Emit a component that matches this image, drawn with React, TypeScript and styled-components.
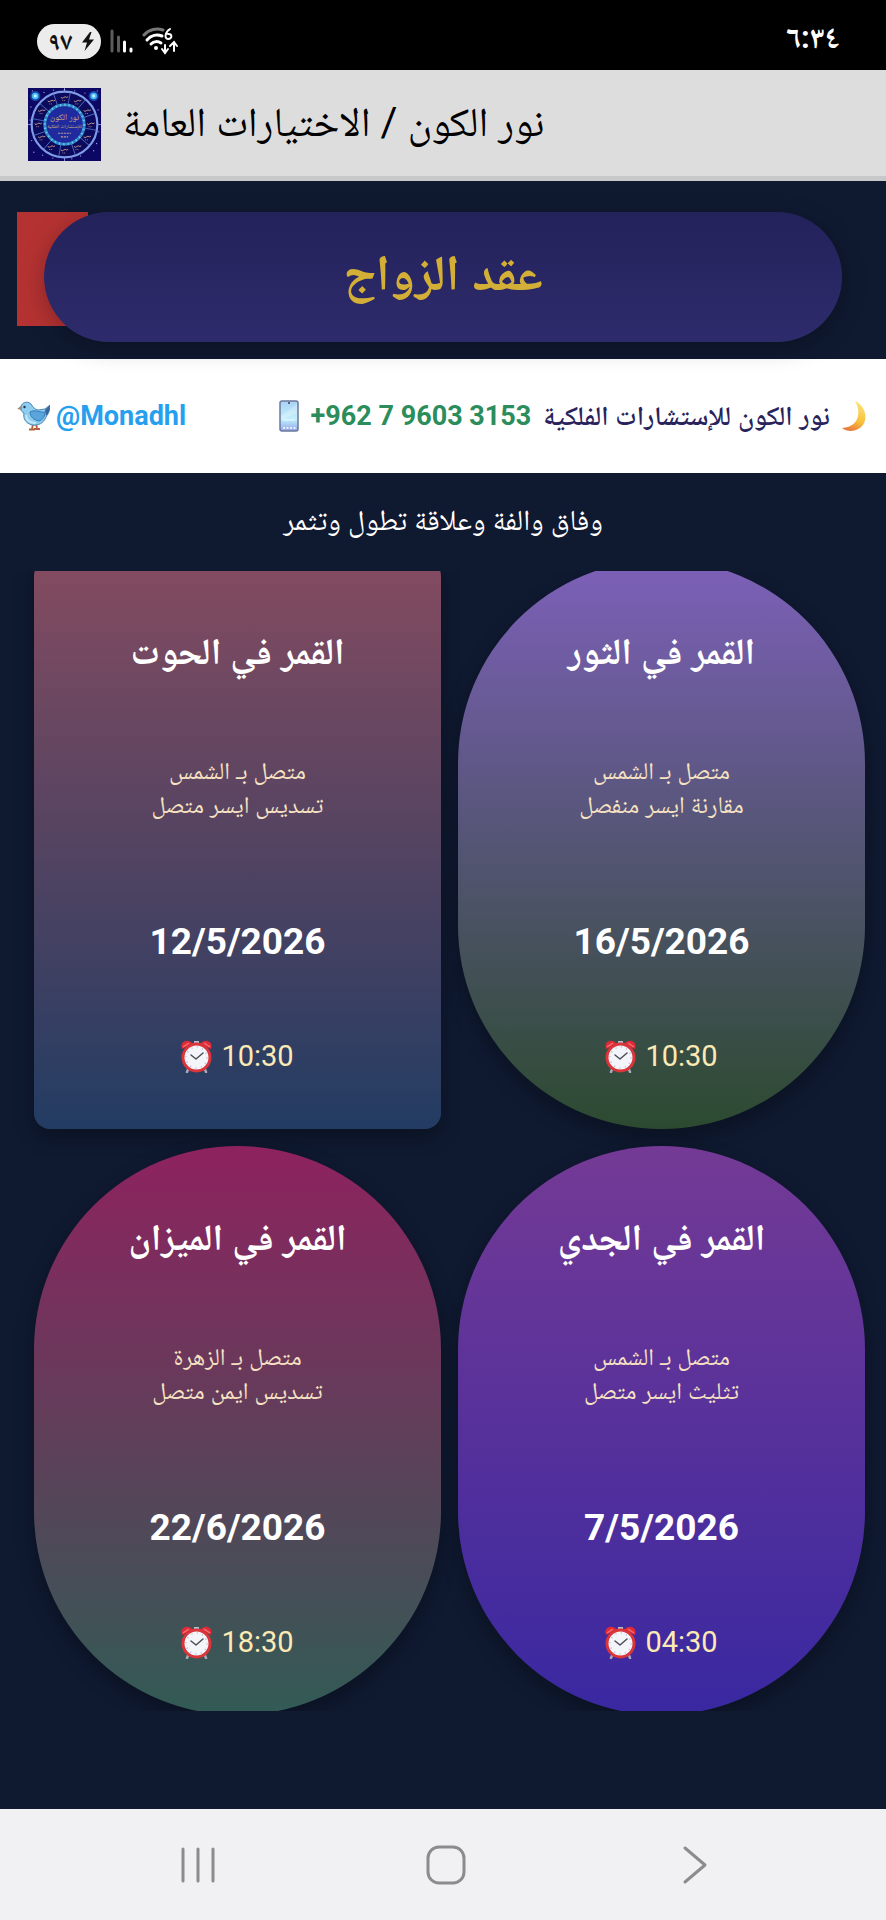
import { useLayoutEffect, useRef } from 'react';
import styled, { createGlobalStyle } from 'styled-components';

const GlobalStyle = createGlobalStyle`
  * {
    box-sizing: border-box;
  }

  body {
    margin: 0;
    background: #0f1930;
    font-family: Roboto, 'Noto Naskh Arabic', 'DejaVu Sans', sans-serif;
  }

  h1, h2, p {
    margin: 0;
  }
`;

const Screen = styled.div`
  display: flex;
  flex-direction: column;
  height: 100vh;
`;

const StatusBar = styled.div`
  display: flex;
  align-items: center;
  gap: 9px;
  height: 70px;
  padding: 12px 46px 0 37px;
  background: #000;
  color: #fff;
  direction: ltr;
`;

const Battery = styled.span`
  display: flex;
  align-items: center;
  justify-content: space-between;
  width: 64px;
  height: 35px;
  padding: 0 7px 0 11px;
  border-radius: 18px;
  background: #ececec;
  color: #111;
  font-size: 25px;
  font-weight: 700;
  line-height: 35px;
`;

const Clock = styled.time`
  margin-left: auto;
  padding-bottom: 6px;
  font-size: 31px;
  font-weight: 700;
  line-height: 40px;
`;

const AppBar = styled.header`
  display: flex;
  align-items: center;
  gap: 22px;
  height: 111px;
  padding: 2px 28px 0;
  border-bottom: 5px solid #c6c8ca;
  background: #dddddd;
  direction: ltr;
`;

const AppTitle = styled.h1`
  padding-bottom: 4px;
  color: #000;
  font-size: 41px;
  font-weight: 400;
  line-height: 64px;
`;

const TopicBar = styled.section`
  position: relative;
  z-index: 1;
  padding: 31px 44px 17px;
`;

const BackButton = styled.button`
  position: absolute;
  top: 31px;
  left: 17px;
  display: flex;
  align-items: center;
  width: 71px;
  height: 114px;
  padding: 0 0 12px 28px;
  border: 0;
  background: #b53232;
  color: #fff;
`;

const Topic = styled.h2`
  position: relative;
  height: 130px;
  border-radius: 65px;
  background: linear-gradient(#24225b, #2d2b6b);
  box-shadow: 0 6px 24px rgba(0, 0, 0, 0.25);
  color: #d3af37;
  font-size: 50px;
  font-weight: 700;
  line-height: 122px;
  text-align: center;
`;

const ContactBar = styled.section`
  display: flex;
  align-items: center;
  justify-content: space-between;
  height: 114px;
  padding: 0 20px 0 17px;
  background: #fff;
`;

const ContactGroup = styled.div`
  display: flex;
  align-items: center;
  gap: 12px;
`;

const Brand = styled.span`
  color: #28235d;
  font-size: 27px;
  font-weight: 600;
  line-height: 40px;
`;

const ContactLink = styled.a<{ $color: string; $gap: number }>`
  display: flex;
  align-items: center;
  gap: ${({ $gap }) => $gap}px;
  color: ${({ $color }) => $color};
  direction: ltr;
  font-size: 27px;
  font-weight: 700;
  line-height: 40px;
  text-decoration: none;
`;

const Summary = styled.p`
  padding: 25px 24px 29px;
  color: #fff;
  font-size: 29px;
  line-height: 44px;
  text-align: center;
`;

const Results = styled.main`
  flex: 1;
  min-height: 0;
  margin-bottom: 98px;
  overflow-y: auto;
  scrollbar-width: none;
`;

const CardGrid = styled.div`
  display: grid;
  grid-template-columns: 1fr 1fr;
  gap: 17px;
  padding: 0 21px 0 34px;
`;

const Card = styled.article<{ $from: string; $to: string; $round: boolean }>`
  padding: 62px 24px 53px;
  border-radius: ${({ $round }) => ($round ? '204px' : '16px')};
  background: linear-gradient(${({ $from, $to }) => `${$from}, ${$to}`});
  box-shadow: 0 8px 20px rgba(0, 0, 0, 0.3);
  text-align: center;
`;

const CardTitle = styled.h2`
  margin-bottom: 72px;
  color: #fff;
  font-size: 37px;
  font-weight: 700;
  line-height: 60px;
`;

const Aspect = styled.p`
  color: #f6e2c2;
  font-size: 24px;
  line-height: 34px;
`;

const CardDate = styled.p`
  margin: 98px 0 72px;
  color: #fff;
  direction: ltr;
  font-size: 37px;
  font-weight: 700;
  line-height: 44px;
`;

const CardTime = styled.p`
  display: flex;
  align-items: center;
  justify-content: center;
  gap: 9px;
  color: #fde9b4;
  direction: ltr;
  font-size: 29px;
  line-height: 40px;
`;

const NavBar = styled.nav`
  display: flex;
  height: 111px;
  padding: 0 67px 0 74px;
  background: #f1f1f3;
  direction: ltr;
`;

const NavButton = styled.button`
  display: flex;
  flex: 1;
  align-items: center;
  justify-content: center;
  border: 0;
  background: none;
  color: #8c8c8e;
`;

const STARS = [[6, 4], [22, 6], [35, 3], [64, 4], [78, 7], [95, 4], [4, 26], [96, 30], [3, 44], [97, 60], [5, 72], [94, 76], [8, 88], [20, 92], [34, 96], [60, 97], [72, 93], [90, 86], [15, 22], [86, 22], [50, 2]];
const HOUSES = Array.from({ length: 12 }, (_, i) => i * 30);

function LogoIcon(): JSX.Element {
  return (
    <svg width="73" height="73" viewBox="0 0 100 100" role="img" aria-label="نور الكون">
      <rect width="100" height="100" fill="#0b0762" />
      {STARS.map(([x, y]) => (
        <circle key={`${x}-${y}`} cx={x} cy={y} r="0.9" fill="#9d9be8" />
      ))}
      {[10, 90].map((x) => (
        <g key={x}>
          <circle cx={x} cy="11" r="7" fill="#1c62c8" opacity="0.7" />
          <circle cx={x} cy="11" r="4.5" fill="#48bdf6" />
          <circle cx={x} cy="11" r="2" fill="#c9f6ff" />
        </g>
      ))}
      <path d="M50 0V8M50 93V100M0 50H6M94 50H100" stroke="#a9b9f2" strokeWidth="1" />
      <circle cx="50" cy="50" r="45" fill="#0c0a5c" stroke="#7f9be6" strokeWidth="3" />
      {HOUSES.map((angle) => (
        <g key={angle} transform={`rotate(${angle} 50 50)`}>
          <path d="M58 6L55 22" stroke="#5a7fd6" strokeWidth="1" />
          <g transform={`translate(50 14) rotate(${-angle})`} stroke="#c79a8a" fill="none">
            <path d="M-5 -1q2 2 4 0t4 0l2 -1" strokeWidth="1.3" />
            <path d="M-3 3h5" strokeWidth="1" strokeDasharray="1.5 1" />
          </g>
        </g>
      ))}
      <circle cx="50" cy="50" r="27" fill="#1e2a9e" stroke="#2f86c9" strokeWidth="4" />
      <circle cx="50" cy="50" r="27" fill="none" stroke="#66c6dd" strokeWidth="3" strokeDasharray="2 4" />
      <g fill="#d0ad7c" textAnchor="middle">
        <text x="50" y="44" fontSize="12">نور الكون</text>
        <text x="50" y="55" fontSize="7">للإستشارات الفلكية</text>
      </g>
      <path d="M41 62h18M45 67h10" stroke="#b99a90" strokeWidth="1.5" strokeDasharray="3 1" />
    </svg>
  );
}

function BoltIcon(): JSX.Element {
  return (
    <svg width="13" height="19" viewBox="0 0 13 19" aria-hidden="true">
      <path d="M9 0L1 10.5h5L3.500 19 13 7.500H8L10.500 0z" fill="#111" />
    </svg>
  );
}

function SignalIcon(): JSX.Element {
  return (
    <svg width="23" height="25" viewBox="0 0 23 25" aria-hidden="true" strokeWidth="3" strokeLinecap="round">
      <path d="M2 2V22M8.500 8V22" stroke="#5c5c5c" />
      <path d="M14.500 13V22M21 20V22" stroke="#fff" />
    </svg>
  );
}

function WifiIcon(): JSX.Element {
  return (
    <svg width="37" height="28" viewBox="0 0 37 28" fill="none" strokeLinecap="round" aria-hidden="true">
      <path d="M2 8C7 2 15 1 21 3" stroke="#777" strokeWidth="3" />
      <path d="M5 13C9 8 15 7 20 9" stroke="#fff" strokeWidth="3" />
      <path d="M9 17C12 14 16 14 19 16" stroke="#fff" strokeWidth="3" />
      <circle cx="14" cy="21" r="2" fill="#fff" />
      <path d="M28 2C23 5 22 12 26 12C31 12 30 6 26 7" stroke="#fff" strokeWidth="2" />
      <path d="M23 18V25M20 22L23 26L26 22" stroke="#fff" strokeWidth="2" />
      <path d="M32 24V16M28 19L32 15L35 19" stroke="#fff" strokeWidth="2" />
    </svg>
  );
}

function MoonIcon(): JSX.Element {
  return (
    <svg width="24" height="30" viewBox="0 0 24 30" aria-hidden="true">
      <defs>
        <linearGradient id="moon" x1="0.600" y1="0" x2="0.300" y2="1">
          <stop offset="0" stopColor="#fbe27a" />
          <stop offset="0.600" stopColor="#f8bf3a" />
          <stop offset="1" stopColor="#e8743c" />
        </linearGradient>
      </defs>
      <path d="M13 0C28 7 27 29 9 30C6 30 2 29 0 27C14 27 21 14 13 0Z" fill="url(#moon)" />
    </svg>
  );
}

function PhoneIcon(): JSX.Element {
  return (
    <svg width="20" height="32" viewBox="0 0 20 32" aria-hidden="true">
      <defs>
        <linearGradient id="phone" x1="0" y1="0" x2="0" y2="1">
          <stop offset="0" stopColor="#a9d2f5" />
          <stop offset="0.600" stopColor="#c3effb" />
          <stop offset="1" stopColor="#8fa6ea" />
        </linearGradient>
      </defs>
      <rect x="1" y="1" width="18" height="30" rx="2" fill="url(#phone)" stroke="#6c789c" strokeWidth="1.500" />
      <path d="M2 16L18 4V13L2 20z" fill="#fff" opacity="0.250" />
      <path d="M4 20H16" stroke="#e7fbff" />
      <circle cx="10" cy="3" r="1" fill="#39415f" />
      <path d="M4 28H17" stroke="#e9edff" strokeWidth="2" strokeDasharray="2 1.500" />
    </svg>
  );
}

function BirdIcon(): JSX.Element {
  return (
    <svg width="33" height="30" viewBox="0 0 33 30" aria-hidden="true">
      <path d="M16 23L15 28M12 28.500H18M19 23L20 27M17 28H23" stroke="#b5613c" strokeWidth="1.800" fill="none" />
      <path d="M0 8L5 4V9z" fill="#b98a63" />
      <path d="M4 8C3 2 10 -1 14 3C16 6 17 8 21 9L28 8L33 4C33 10 31 13 29 16C27 22 21 25 15 24C8 22 6 17 7 12C5 11 4 10 4 8Z" fill="#8fcdf0" stroke="#4a86b5" strokeWidth="1" />
      <path d="M13 11C18 8 23 12 28 11C28 15 26 19 22 20C17 19 13 16 13 11Z" fill="#5aa5dc" stroke="#377db5" />
      <path d="M28 9L33 4C33 9 32 12 29 15z" fill="#39659a" />
      <path d="M9 14C9 19 13 22 19 22" stroke="#c4e8f8" strokeWidth="2" fill="none" />
      <circle cx="7.500" cy="6" r="1.200" fill="#26323d" />
    </svg>
  );
}

function AlarmIcon(): JSX.Element {
  return (
    <svg width="31" height="33" viewBox="0 0 31 33" aria-hidden="true">
      <path d="M8 27L6 32M23 27L25 32" stroke="#a9a9b8" strokeWidth="2.500" strokeLinecap="round" />
      <path d="M13 1H18V5H13z" fill="#b9bdc9" />
      <path d="M1 9C-1 4 3 0 7 1C9 1 11 2 11 4z" fill="#e02a36" />
      <path d="M30 9C32 4 28 0 24 1C22 1 20 2 20 4z" fill="#e02a36" />
      <path d="M2 7L8 3M29 7L23 3" stroke="#f4727a" strokeWidth="1.500" />
      <circle cx="15.500" cy="17.500" r="13.500" fill="#f4f4fb" stroke="#d9353b" strokeWidth="3" />
      <circle cx="15.500" cy="17.500" r="10.500" fill="none" stroke="#b9b9cc" strokeWidth="1.500" strokeDasharray="1 4.500" />
      <path d="M10 15L15 19L22 13" fill="none" stroke="#4b4f56" strokeWidth="1.500" strokeLinecap="round" strokeLinejoin="round" />
    </svg>
  );
}

type Election = {
  sign: string;
  planet: string;
  aspect: string;
  date: string;
  time: string;
  from: string;
  to: string;
  round: boolean;
};

const elections: Election[] = [
  { sign: 'الثور', planet: 'الشمس', aspect: 'مقارنة ايسر منفصل', date: '16/5/2026', time: '10:30', from: '#7d60b9', to: '#2c4a30', round: true },
  { sign: 'الحوت', planet: 'الشمس', aspect: 'تسديس ايسر متصل', date: '12/5/2026', time: '10:30', from: '#844b60', to: '#233c63', round: false },
  { sign: 'الجدي', planet: 'الشمس', aspect: 'تثليث ايسر متصل', date: '7/5/2026', time: '04:30', from: '#743a95', to: '#3928a1', round: true },
  { sign: 'الميزان', planet: 'الزهرة', aspect: 'تسديس ايمن متصل', date: '22/6/2026', time: '18:30', from: '#8e225f', to: '#325b55', round: true },
];

function ElectionCard({ item }: { item: Election }): JSX.Element {
  return (
    <Card $from={item.from} $to={item.to} $round={item.round}>
      <CardTitle>القمر في {item.sign}</CardTitle>
      <Aspect>متصل بـ {item.planet}</Aspect>
      <Aspect>{item.aspect}</Aspect>
      <CardDate>{item.date}</CardDate>
      <CardTime>
        <AlarmIcon />
        {item.time}
      </CardTime>
    </Card>
  );
}

export default function App(): JSX.Element {
  const resultsRef = useRef<HTMLElement>(null);

  // The list opens slightly scrolled, so the first row runs under the summary.
  useLayoutEffect(() => {
    if (resultsRef.current) resultsRef.current.scrollTop = 11;
  }, []);

  return (
    <Screen dir="rtl" lang="ar">
      <GlobalStyle />
      <StatusBar>
        <Battery>
          ٩٧
          <BoltIcon />
        </Battery>
        <SignalIcon />
        <WifiIcon />
        <Clock>٦:٣٤</Clock>
      </StatusBar>

      <AppBar>
        <LogoIcon />
        <AppTitle dir="rtl">نور الكون / الاختيارات العامة</AppTitle>
      </AppBar>

      <TopicBar>
        <BackButton type="button" aria-label="رجوع">
          <svg width="12" height="16" viewBox="0 0 12 16" fill="none" aria-hidden="true">
            <path d="M10 2L2 8L10 14" stroke="currentColor" strokeWidth="3" />
          </svg>
        </BackButton>
        <Topic>عقد الزواج</Topic>
      </TopicBar>

      <ContactBar>
        <ContactGroup>
          <MoonIcon />
          <Brand>نور الكون للإستشارات الفلكية</Brand>
          <ContactLink $color="#2b8d5b" $gap={12} href="tel:+962796033153">
            <PhoneIcon />
            +962 7 9603 3153
          </ContactLink>
        </ContactGroup>
        <ContactLink $color="#269fee" $gap={6} href="#monadhl">
          <BirdIcon />
          @Monadhl
        </ContactLink>
      </ContactBar>

      <Summary>وفاق والفة وعلاقة تطول وتثمر</Summary>

      <Results ref={resultsRef}>
        <CardGrid>
          {elections.map((item) => (
            <ElectionCard key={item.sign} item={item} />
          ))}
        </CardGrid>
      </Results>

      <NavBar aria-label="system">
        <NavButton type="button" aria-label="recents">
          <svg width="34" height="38" viewBox="0 0 34 38" stroke="currentColor" strokeWidth="3" strokeLinecap="round">
            <path d="M2 3V35M17 3V35M32 3V35" />
          </svg>
        </NavButton>
        <NavButton type="button" aria-label="home">
          <svg width="40" height="40" viewBox="0 0 40 40" fill="none" stroke="currentColor" strokeWidth="3">
            <rect x="2" y="2" width="36" height="36" rx="11" />
          </svg>
        </NavButton>
        <NavButton type="button" aria-label="back">
          <svg width="26" height="40" viewBox="0 0 26 40" fill="none" stroke="currentColor" strokeWidth="3" strokeLinecap="round" strokeLinejoin="round">
            <path d="M3 3L23 20L3 37" />
          </svg>
        </NavButton>
      </NavBar>
    </Screen>
  );
}
